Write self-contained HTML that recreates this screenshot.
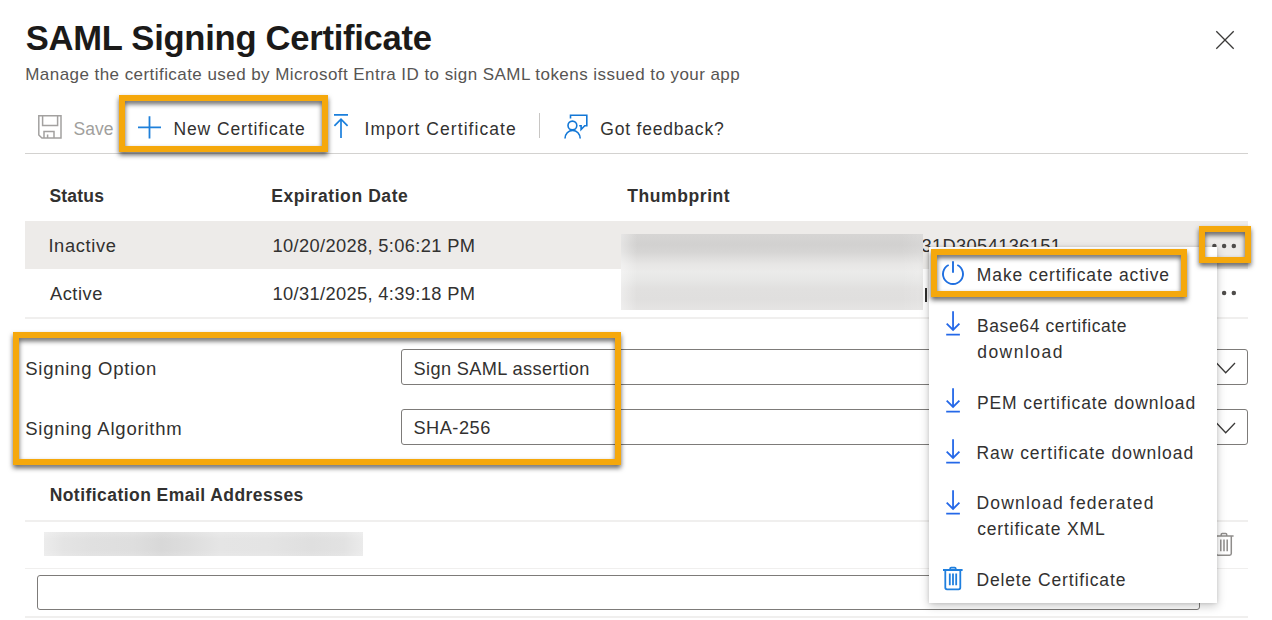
<!DOCTYPE html>
<html>
<head>
<meta charset="utf-8">
<title>SAML Signing Certificate</title>
<style>
html,body{margin:0;padding:0;}
body{width:1272px;height:620px;position:relative;overflow:hidden;background:#fff;font-family:"Liberation Sans",sans-serif;color:#323130;}
.t{position:absolute;white-space:nowrap;line-height:1;font-size:17.5px;letter-spacing:0.7px;color:#323130;}
.b{font-weight:bold;}
.hl{position:absolute;height:1.6px;background:#f0efee;left:25.3px;width:1222.7px;}
.ob{position:absolute;box-sizing:border-box;border:6px solid #f5a80c;filter:drop-shadow(0.8px 3.5px 2.6px rgba(0,0,0,0.62));}
.sel{position:absolute;box-sizing:border-box;border:1px solid #7d7b79;border-radius:3px;background:#fff;}
svg{position:absolute;overflow:visible;}
.blur{position:absolute;background:#dedddc;}
</style>
</head>
<body>

<!-- Header -->
<div class="t b" id="title" style="left:25.75px;top:21px;font-size:34.6px;letter-spacing:-0.267px;color:#1b1a19;">SAML Signing Certificate</div>
<div class="t" id="sub" style="left:25.25px;top:66px;font-size:17px;letter-spacing:0.443px;color:#575553;">Manage the certificate used by Microsoft Entra ID to sign SAML tokens issued to your app</div>

<!-- close X -->
<svg style="left:1216px;top:30.5px;" width="18" height="18" viewBox="0 0 18 18"><path d="M0.3 0.3 L17.7 17.7 M17.7 0.3 L0.3 17.7" stroke="#3b3a39" stroke-width="1.3" fill="none"/></svg>

<!-- Toolbar -->
<svg id="saveic" style="left:37.7px;top:115px;" width="25" height="25" viewBox="0 0 25 25"><path d="M0.8 0.8 H23 V23.1 H3.9 L0.8 20 Z M4.6 0.8 V10.4 H19.6 V0.8 M6 23.1 V16.4 H16 V23.1 M9.6 23.1 V19.4" stroke="#a3a1a0" stroke-width="1.5" fill="none"/></svg>
<div class="t" id="save" style="left:73.50px;top:121px;color:#a19f9d;letter-spacing:0.000px;font-size:17.5px;">Save</div>

<svg id="plusic" style="left:137.7px;top:115.8px;" width="23" height="22.6" viewBox="0 0 23 22.6"><path d="M11.5 0.2 V22.5 M0 11.3 H23" stroke="#1f80da" stroke-width="1.8" fill="none"/></svg>
<div class="t" id="newc" style="left:173.40px;top:121px;letter-spacing:0.904px;font-size:17.5px;">New Certificate</div>

<svg id="impic" style="left:333.9px;top:114.4px;" width="14" height="25" viewBox="0 0 14 25"><path d="M0 0.9 H14 M7 24.1 V5.2 M0.4 11.9 L7 5.1 L13.6 11.9" stroke="#1a7fdc" stroke-width="1.7" fill="none"/></svg>
<div class="t" id="impc" style="left:364.50px;top:121px;letter-spacing:1.059px;font-size:17.5px;">Import Certificate</div>

<div style="position:absolute;left:539.3px;top:113.3px;width:1.2px;height:25.2px;background:#c8c6c4;"></div>

<svg id="fbic" style="left:564px;top:114.3px;" width="25" height="25" viewBox="0 0 25 25"><g stroke="#1277d6" stroke-width="1.6" fill="none"><path d="M6.5 4.5 V1.3 H22.8 V11.8 H20.7 L17.1 15.6 V11.8 H15.2"/><circle cx="8.4" cy="11.5" r="4.4"/><path d="M1 24.6 A7.6 8.2 0 0 1 16.2 24.6"/></g></svg>
<div class="t" id="gotf" style="left:600.30px;top:121px;letter-spacing:0.797px;font-size:17.5px;">Got feedback?</div>

<div class="hl" style="top:153px;height:1px;background:#d3d2d0;"></div>

<!-- Table -->
<div class="t b" id="hstatus" style="left:49.40px;top:188px;letter-spacing:0.200px;font-size:17.5px;">Status</div>
<div class="t b" id="hexp" style="left:271.20px;top:188px;letter-spacing:0.593px;font-size:17.5px;">Expiration Date</div>
<div class="t b" id="hthumb" style="left:627.25px;top:188px;letter-spacing:0.581px;font-size:17.5px;">Thumbprint</div>

<div id="row1" style="position:absolute;left:25px;top:221.4px;width:1223px;height:47.9px;background:#edebe9;"></div>
<div class="t" id="inactive" style="left:48.40px;top:237px;letter-spacing:0.648px;font-size:18.3px;">Inactive</div>
<div class="t" id="d1" style="left:272.50px;top:237px;letter-spacing:0.347px;font-size:18.3px;">10/20/2028, 5:06:21 PM</div>
<div class="t" id="tp1" style="left:921.5px;top:237px;letter-spacing:0.35px;font-size:18.3px;">31D3054136151</div>

<div class="t" id="active" style="left:49.90px;top:285px;letter-spacing:0.560px;font-size:18.3px;">Active</div>
<div class="t" id="d2" style="left:272.50px;top:285px;letter-spacing:0.347px;font-size:18.3px;">10/31/2025, 4:39:18 PM</div>
<div style="position:absolute;left:924.5px;top:288px;width:2px;height:14px;background:#323130;"></div>

<div class="blur" id="blur1" style="left:621.2px;top:234.2px;width:301.5px;height:75.6px;background:linear-gradient(90deg,rgba(255,255,255,0.4) 0,rgba(255,255,255,0) 16px,rgba(255,255,255,0) 280px,rgba(255,255,255,0.12) 100%),linear-gradient(180deg,#d6d5d4 0%,#d2d1d0 14%,#d6d5d4 24%,#dfdedd 32%,#e7e6e5 40%,#ebebea 50%,#e7e7e6 60%,#e1e0df 72%,#e0dfde 86%,#e5e4e3 100%);"></div>

<!-- ellipsis dots -->
<svg style="left:1210px;top:240px;" width="30" height="60" viewBox="0 0 30 60"><g fill="#4f4d4b"><circle cx="4.4" cy="5.9" r="2.25"/><circle cx="14.1" cy="5.9" r="2.25"/><circle cx="23.8" cy="5.9" r="2.25"/><circle cx="4.4" cy="53" r="2.25"/><circle cx="14.1" cy="53" r="2.25"/><circle cx="23.8" cy="53" r="2.25"/></g></svg>

<div class="hl" style="top:317.3px;"></div>

<!-- Signing options -->
<div class="t" id="sopt" style="left:25.25px;top:360px;letter-spacing:0.744px;font-size:18.5px;">Signing Option</div>
<div class="sel" style="left:401px;top:349px;width:847px;height:35.5px;"></div>
<div class="t" id="sopv" style="left:413.50px;top:360px;letter-spacing:0.370px;font-size:18.2px;">Sign SAML assertion</div>
<svg style="left:1216px;top:362px;" width="20" height="12" viewBox="0 0 20 12"><path d="M0.5 1 L9.7 10.7 L19 1" stroke="#3b3a39" stroke-width="1.3" fill="none"/></svg>

<div class="t" id="salg" style="left:25.25px;top:420px;letter-spacing:0.780px;font-size:18.5px;">Signing Algorithm</div>
<div class="sel" style="left:401px;top:409px;width:847px;height:35.5px;"></div>
<div class="t" id="salv" style="left:413.50px;top:419px;letter-spacing:0.492px;font-size:18.2px;">SHA-256</div>
<svg style="left:1216px;top:422px;" width="20" height="12" viewBox="0 0 20 12"><path d="M0.5 1 L9.7 10.7 L19 1" stroke="#3b3a39" stroke-width="1.3" fill="none"/></svg>

<!-- Notification -->
<div class="t b" id="notif" style="left:49.65px;top:487px;letter-spacing:0.452px;font-size:17.5px;">Notification Email Addresses</div>
<div class="hl" style="top:520px;"></div>
<div class="blur" id="blur2" style="left:44px;top:532.2px;width:319px;height:23.7px;background:linear-gradient(180deg,rgba(255,255,255,0.18) 0,rgba(255,255,255,0) 30%,rgba(255,255,255,0) 75%,rgba(255,255,255,0.12) 100%),linear-gradient(90deg,#ececec 0%,#e4e4e4 6%,#e0e0e0 15%,#dedede 28%,#d8d8d8 37%,#dddddd 45%,#e5e5e5 55%,#e4e4e4 70%,#dfdfdf 84%,#e2e2e2 94%,#ebebeb 100%);"></div>
<svg id="trash2" style="left:1214.3px;top:531.8px;" width="19.6" height="25" viewBox="0 0 19.6 25"><g stroke="#8f8d8b" stroke-width="1.5" fill="none"><path d="M0 4 H19.6 M7.2 4 V2.6 Q7.2 1.6 8.2 1.6 H11.7 Q12.7 1.6 12.7 2.6 V4 M2.3 4 V21.6 Q2.3 23.3 4 23.3 H15.6 Q17.3 23.3 17.3 21.6 V4 M6.8 7.6 V19.3 M10 7.6 V19.3 M13.2 7.6 V19.3"/></g></svg>
<div class="hl" style="top:567.6px;"></div>
<div class="sel" style="left:37px;top:574.5px;width:1163px;height:35.3px;"></div>
<div class="hl" style="top:616px;"></div>

<!-- Context menu -->
<div id="menu" style="position:absolute;left:928.5px;top:247.3px;width:288.7px;height:356px;background:#fff;box-shadow:0 3px 9px rgba(0,0,0,0.22),0 0 3px rgba(0,0,0,0.12);"></div>

<svg id="pwr" style="left:942px;top:261px;" width="22" height="24" viewBox="0 0 22 24"><path d="M11 0.2 V11.7 M6.7 4 A10 10 0 1 0 15.3 4" stroke="#1f6fe0" stroke-width="1.9" fill="none"/></svg>
<div class="t" id="m1" style="left:976.85px;top:267px;letter-spacing:0.868px;font-size:17.5px;">Make certificate active</div>

<svg class="dl" style="left:945.9px;top:311.2px;" width="14.1" height="25" viewBox="0 0 14.1 25"><path d="M7.05 0.2 V18.6 M0.7 12.6 L7.05 19 L13.4 12.6 M0.2 23.6 H13.9" stroke="#2468e8" stroke-width="1.8" fill="none"/></svg>
<div class="t" id="m2a" style="left:976.90px;top:318px;letter-spacing:0.623px;font-size:17.5px;">Base64 certificate</div>
<div class="t" id="m2b" style="left:977.20px;top:344px;letter-spacing:1.479px;font-size:17.5px;">download</div>

<svg class="dl" style="left:945.9px;top:388.2px;" width="14.1" height="25" viewBox="0 0 14.1 25"><path d="M7.05 0.2 V18.6 M0.7 12.6 L7.05 19 L13.4 12.6 M0.2 23.6 H13.9" stroke="#2468e8" stroke-width="1.8" fill="none"/></svg>
<div class="t" id="m3" style="left:976.90px;top:395px;letter-spacing:0.908px;font-size:17.5px;">PEM certificate download</div>

<svg class="dl" style="left:945.9px;top:438.9px;" width="14.1" height="25" viewBox="0 0 14.1 25"><path d="M7.05 0.2 V18.6 M0.7 12.6 L7.05 19 L13.4 12.6 M0.2 23.6 H13.9" stroke="#2468e8" stroke-width="1.8" fill="none"/></svg>
<div class="t" id="m4" style="left:976.40px;top:445px;letter-spacing:0.968px;font-size:17.5px;">Raw certificate download</div>

<svg class="dl" style="left:945.9px;top:489.5px;" width="14.1" height="25" viewBox="0 0 14.1 25"><path d="M7.05 0.2 V18.6 M0.7 12.6 L7.05 19 L13.4 12.6 M0.2 23.6 H13.9" stroke="#2468e8" stroke-width="1.8" fill="none"/></svg>
<div class="t" id="m5a" style="left:976.40px;top:495px;letter-spacing:1.199px;font-size:17.5px;">Download federated</div>
<div class="t" id="m5b" style="left:977.15px;top:521px;letter-spacing:0.840px;font-size:17.5px;">certificate XML</div>

<svg id="trash1" style="left:943.2px;top:565.5px;" width="19.6" height="25" viewBox="0 0 19.6 25"><g stroke="#1f7fde" stroke-width="1.8" fill="none"><path d="M0 4 H19.6 M7.2 4 V2.6 Q7.2 1.6 8.2 1.6 H11.7 Q12.7 1.6 12.7 2.6 V4 M2.3 4 V21.6 Q2.3 23.3 4 23.3 H15.6 Q17.3 23.3 17.3 21.6 V4 M6.8 7.6 V19.3 M10 7.6 V19.3 M13.2 7.6 V19.3"/></g></svg>
<div class="t" id="m6" style="left:976.40px;top:572px;letter-spacing:0.868px;font-size:17.5px;">Delete Certificate</div>

<!-- Orange highlight boxes -->
<div class="ob" id="ob1" style="left:119px;top:95px;width:209.2px;height:57px;"></div>
<div class="ob" id="ob2" style="left:13px;top:332px;width:607.7px;height:133.3px;"></div>
<div class="ob" id="ob3" style="left:930.7px;top:248.8px;width:256.5px;height:48px;"></div>
<div class="ob" id="ob4" style="left:1199px;top:226px;width:52px;height:37.3px;"></div>

</body>
</html>
